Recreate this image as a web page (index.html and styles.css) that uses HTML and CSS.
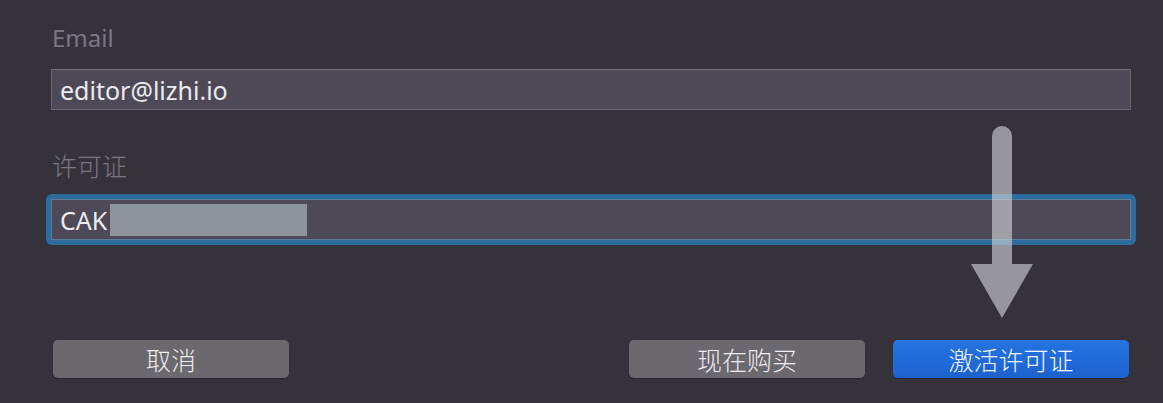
FILE: index.html
```html
<!DOCTYPE html>
<html lang="zh-CN">
<head>
  <meta charset="UTF-8">
  <title>激活许可证</title>
  <link rel="stylesheet" href="styles.css">
</head>
<body>
  <div class="panel">
    <form class="license-form">
      <label class="field-label" for="email">Email</label>
      <div class="field">
        <input class="text-input" type="text" id="email" value="editor@lizhi.io">
      </div>

      <label class="field-label license-label" for="license">许可证</label>
      <div class="field focused">
        <div class="text-input license-input">
          <span>CAK</span><span class="redacted"></span>
        </div>
      </div>

      <div class="actions">
        <button type="button" class="btn">取消</button>
        <div class="actions-right">
          <button type="button" class="btn">现在购买</button>
          <button type="submit" class="btn primary">激活许可证</button>
        </div>
      </div>
    </form>

    <!-- hint arrow drawn over the form -->
    <svg class="hint-arrow" width="64" height="194" viewBox="0 0 64 194">
      <path d="M21 10 A10 10 0 0 1 41 10 V138 H62 L31 192 L0 138 H21 Z" fill="rgb(212,210,218)"/>
    </svg>
  </div>
</body>
</html>
```

FILE: styles.css
```css
/* General Styling */
body {
  margin: 0;
  padding: 0;
  background: #35323b;
  font-family: "Noto Sans", "Noto Sans CJK SC", sans-serif;
  color: #e9e7ec;
}

.panel {
  position: relative;
  width: 1163px;
  height: 403px;
}

.license-form {
  padding: 23px 32px 0 51px;
}

.field-label {
  display: block;
  height: 30px;
  font-size: 24px;
  line-height: 30px;
  color: #7b7686;
  padding-left: 1px;
  margin-bottom: 16px;
}

.license-label {
  margin-top: 40px;
  margin-bottom: 14px;
  font-family: "Noto Sans CJK SC", sans-serif;
  font-size: 25px;
  font-weight: 300;
}

.field {
  border-radius: 6px;
}

.text-input {
  display: block;
  box-sizing: border-box;
  width: 100%;
  height: 41px;
  margin: 0;
  padding: 0 8px;
  background: #4d4956;
  border: 1px solid #6a6672;
  border-top-color: #716d79;
  font-family: inherit;
  font-size: 25px;
  color: #ecebef;
  outline: none;
}

.focused {
  margin-left: -5px;
  margin-right: -5px;
  padding: 5px;
  background: #2e6c9d;
}

.license-input {
  display: flex;
  align-items: center;
  height: 41px;
  border-color: #5d7d99;
}

.redacted {
  display: inline-block;
  width: 197px;
  height: 32px;
  margin-left: 3px;
  background: #8d949b;
}

.actions {
  display: flex;
  justify-content: space-between;
  margin-top: 95px;
  padding-left: 2px;
  padding-right: 2px;
}

.actions-right {
  display: flex;
  gap: 28px;
}

.btn {
  width: 236px;
  height: 38px;
  border: none;
  border-radius: 5px;
  background: #6b686e;
  color: #eeedf0;
  font-family: "Noto Sans CJK SC", sans-serif;
  font-size: 25px;
  font-weight: 300;
  line-height: 38px;
  padding: 0;
  box-shadow: 0 1px 1px rgba(0, 0, 0, 0.25);
  cursor: pointer;
}

.btn.primary {
  background: linear-gradient(to bottom, #2675e2, #1c62cf);
  color: #f2f6ff;
}

.hint-arrow {
  position: absolute;
  left: 971px;
  top: 126px;
  opacity: 0.62;
}
```
